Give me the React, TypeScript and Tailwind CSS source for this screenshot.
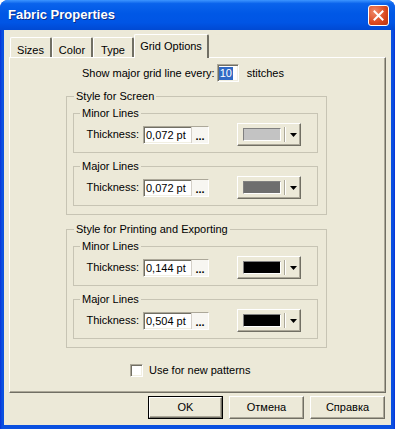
import React from "react";

const raised =
  "border border-l-white border-t-white border-r-[#716F64] border-b-[#716F64] shadow-[inset_-1px_-1px_0_#ACA899]";
const sunken =
  "border border-l-[#ACA899] border-t-[#ACA899] border-r-white border-b-white shadow-[inset_1px_1px_0_#716F64,inset_-1px_-1px_0_#F1EFE2]";

function Arrow() {
  return (
    <svg width="7" height="4" viewBox="0 0 7 4" className="block">
      <polygon points="0,0 7,0 3.5,4" fill="#000" />
    </svg>
  );
}

function LineRow({ value, color }: { value: string; color: string }) {
  return (
    <div className="flex items-center h-[23px] mt-[4px] mb-[6px]">
      <span className="w-[65px] text-right">Thickness:</span>
      <div className={`ml-[4px] w-[66px] h-[18px] bg-white flex items-stretch ${sunken}`}>
        <span className="flex-1 pl-[2px] leading-[16px]">{value}</span>
        <span className="w-[17px] bg-[#F7F6F1] border-l border-[#D4D0C8] flex items-end justify-center font-bold leading-[10px] pb-[2px]">
          ...
        </span>
      </div>
      <div className={`ml-[28px] w-[64px] h-[23px] bg-[#ECE9D8] flex items-center ${raised}`}>
        <div
          className="ml-[5px] w-[38px] h-[13px] border border-[#808080] border-r-white border-b-white"
          style={{ backgroundColor: color }}
        />
        <div className="ml-[3px] h-[15px] w-[2px] border-l border-[#ACA899] border-r border-r-white" />
        <div className="ml-[4px]">
          <Arrow />
        </div>
      </div>
    </div>
  );
}

function Group({
  title,
  className,
  children,
}: {
  title: string;
  className?: string;
  children: React.ReactNode;
}) {
  return (
    <fieldset className={`border border-[#C7C4B4] p-0 m-0 ${className ?? ""}`}>
      <legend className="ml-[6px] px-[2px] leading-[12px] font-normal">{title}</legend>
      {children}
    </fieldset>
  );
}

function StyleBlock({
  title,
  minor,
  major,
  className,
}: {
  title: string;
  minor: [string, string];
  major: [string, string];
  className?: string;
}) {
  return (
    <fieldset className={`ml-[56px] w-[261px] border border-[#C7C4B4] p-0 m-0 ${className ?? ""}`}>
      <legend className="ml-[7px] px-[2px] leading-[12px] font-normal">{title}</legend>
      <div className="pt-[5px] pb-[8px] pl-[6px]">
        <Group title="Minor Lines" className="w-[245px]">
          <LineRow value={minor[0]} color={minor[1]} />
        </Group>
        <Group title="Major Lines" className="w-[245px] mt-[7px]">
          <LineRow value={major[0]} color={major[1]} />
        </Group>
      </div>
    </fieldset>
  );
}

function Tab({ label, w, active }: { label: string; w: string; active?: boolean }) {
  if (active) {
    return (
      <div
        className={`${w} h-[24px] -mb-[1px] relative z-10 bg-[#ECE9D8] border-l border-t border-white border-r-2 border-r-[#716F64] rounded-t-[2px] flex items-start justify-center pt-[3px]`}
      >
        {label}
      </div>
    );
  }
  return (
    <div
      className={`${w} h-[20px] bg-[#ECE9D8] border-l border-t border-white border-r-2 border-r-[#716F64] rounded-t-[2px] flex items-start justify-center pt-[4px]`}
    >
      {label}
    </div>
  );
}

export default function App() {
  return (
    <div className="w-[395px] h-[429px] flex flex-col bg-[linear-gradient(to_right,#0831D9,#0A50E0_2px,#0A50E0_calc(100%-2px),#0831D9)] rounded-t-[8px] overflow-hidden font-['Liberation_Sans',Arial,sans-serif] text-[11px] text-black">
      {/* Title bar */}
      <div className="h-[30px] shrink-0 flex items-center pl-[8px] pr-[6px] bg-[linear-gradient(to_bottom,#3D95FF_0%,#0A63EC_12%,#0058E6_45%,#0055E5_75%,#0049D3_100%)]">
        <span className="flex-1 text-white font-bold text-[13px] [text-shadow:1px_1px_0_#0A2E8A]">
          Fabric Properties
        </span>
        <div className="w-[21px] h-[21px] rounded-[3px] border border-white bg-[radial-gradient(circle_at_30%_30%,#F08A6A,#D9481F_60%,#B8340F)] flex items-center justify-center">
          <svg width="11" height="11" viewBox="0 0 11 11">
            <path d="M1.5 1.5 L9.5 9.5 M9.5 1.5 L1.5 9.5" stroke="#fff" strokeWidth="2" strokeLinecap="square" />
          </svg>
        </div>
      </div>

      {/* Client area */}
      <div className="flex-1 mx-[4px] mb-[4px] bg-[#ECE9D8] flex flex-col">
        {/* Tabs */}
        <div className="h-[27px] pt-[4px] pl-[6px] flex items-end">
          <Tab label="Sizes" w="w-[42px]" />
          <Tab label="Color" w="w-[41px]" />
          <Tab label="Type" w="w-[41px]" />
          <Tab label="Grid Options" w="w-[75px]" active />
        </div>

        {/* Tab panel */}
        <div className={`ml-[5px] w-[377px] h-[336px] ${raised}`}>
          <div className="mt-[6px] h-[18px] pl-[72px] flex items-center">
            <span>Show major grid line every:</span>
            <div className={`ml-[2px] w-[22px] h-[18px] bg-white flex items-center pl-[1px] ${sunken}`}>
              <span className="bg-[#316AC5] text-white leading-[13px] px-[1px]">10</span>
            </div>
            <span className="ml-[8px]">stitches</span>
          </div>

          <StyleBlock
            title="Style for Screen"
            className="mt-[8px]"
            minor={["0,072 pt", "#C3C3C3"]}
            major={["0,072 pt", "#6E6E6E"]}
          />
          <StyleBlock
            title="Style for Printing and Exporting"
            className="mt-[8px]"
            minor={["0,144 pt", "#000000"]}
            major={["0,504 pt", "#000000"]}
          />

          <div className="mt-[14px] pl-[120px] flex items-center">
            <div className={`w-[13px] h-[13px] bg-white ${sunken}`} />
            <span className="ml-[6px]">Use for new patterns</span>
          </div>
        </div>

        {/* Buttons */}
        <div className="mt-[3px] pr-[6px] flex justify-end gap-[6px]">
          <div className="w-[75px] h-[23px] border border-black">
            <div className={`w-full h-full bg-[#ECE9D8] flex items-center justify-center ${raised}`}>OK</div>
          </div>
          <div className={`w-[75px] h-[23px] bg-[#ECE9D8] flex items-center justify-center ${raised}`}>Отмена</div>
          <div className={`w-[75px] h-[23px] bg-[#ECE9D8] flex items-center justify-center ${raised}`}>Справка</div>
        </div>
      </div>
    </div>
  );
}
